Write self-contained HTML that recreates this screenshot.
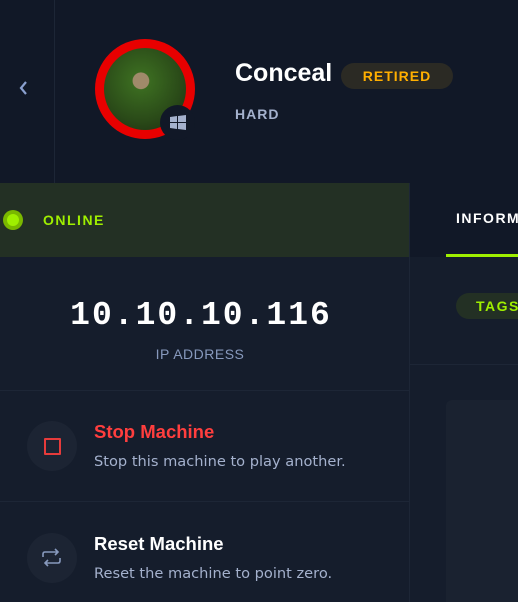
<!DOCTYPE html>
<html><head><style>
*{margin:0;padding:0;box-sizing:border-box}
html,body{width:518px;height:602px;overflow:hidden}
body{background:#151d2c;font-family:"Liberation Sans",sans-serif;position:relative}
.a{position:absolute}
</style></head><body>
<div class="a" style="left:0;top:0;width:518px;height:183px;background:#111827"></div>
<div class="a" style="left:54px;top:0;width:1px;height:183px;background:#1d2636"></div>
<svg class="a" style="left:16px;top:80px" width="14" height="16"><path d="M10 2 L5 8 L10 14" fill="none" stroke="#8aa0cf" stroke-width="2.2"/></svg>
<div class="a" style="left:95px;top:39px;width:100px;height:100px;border-radius:50%;background:#e80000"></div>
<div class="a" style="left:104px;top:48px;width:82px;height:82px;border-radius:50%;background:radial-gradient(circle at 45% 40%,#a08a6a 0 12%,#3a6a20 13%,#2a4a18 60%,#1a2a10)"></div>
<div class="a" style="left:160px;top:105px;width:35px;height:35px;border-radius:50%;background:#111827"></div>
<svg class="a" style="left:168px;top:113px" width="20" height="20"><path d="M2 4 L9 3 L9 9 L2 9Z M10 3 L18 2 L18 9 L10 9Z M2 10 L9 10 L9 16 L2 15Z M10 10 L18 10 L18 17 L10 16Z" fill="#a4b1cd"/></svg>
<div class="a" style="left:235px;top:59px;font-size:25px;font-weight:bold;color:#fff">Conceal</div>
<div class="a" style="left:341px;top:63px;width:112px;height:26px;border-radius:13px;background:#2b2a24;color:#ffaf00;font-size:14px;font-weight:bold;letter-spacing:1px;line-height:26px;text-align:center">RETIRED</div>
<div class="a" style="left:235px;top:106px;font-size:14px;font-weight:bold;color:#a4b1cd;letter-spacing:1px">HARD</div>
<div class="a" style="left:0;top:183px;width:409px;height:74px;background:#233024"></div>
<div class="a" style="left:3px;top:210px;width:20px;height:20px;border-radius:50%;background:#7ab800"></div>
<div class="a" style="left:7px;top:214px;width:12px;height:12px;border-radius:50%;background:#9fef00"></div>
<div class="a" style="left:43px;top:212px;font-size:14px;font-weight:bold;color:#9fef00;letter-spacing:1.5px">ONLINE</div>
<div class="a" style="left:409px;top:183px;width:1px;height:419px;background:#1d2636"></div>
<div class="a" style="left:410px;top:183px;width:108px;height:74px;background:#111827;overflow:hidden">
<div class="a" style="left:46px;top:27px;font-size:14px;font-weight:bold;color:#fff;letter-spacing:1.5px;white-space:nowrap">INFORMATION</div>
<div class="a" style="left:36px;top:71px;width:72px;height:3px;background:#9fef00"></div>
</div>
<div class="a" style="left:410px;top:364px;width:108px;height:1px;background:#1d2636"></div>
<div class="a" style="left:456px;top:293px;width:62px;height:26px;border-radius:13px 0 0 13px;background:#233024;color:#9fef00;font-size:14px;font-weight:bold;letter-spacing:1.5px;line-height:26px;padding-left:20px;overflow:hidden">TAGS</div>
<div class="a" style="left:446px;top:400px;width:72px;height:202px;border-radius:6px 0 0 0;background:#1a2230"></div>
<div class="a" style="left:0;top:297px;width:402px;text-align:center;font-family:'Liberation Mono',monospace;font-weight:bold;font-size:33px;letter-spacing:2px;color:#fff">10.10.10.116</div>
<div class="a" style="left:0;top:346px;width:400px;text-align:center;font-size:14px;color:#8799bd;letter-spacing:.5px">IP ADDRESS</div>
<div class="a" style="left:0;top:390px;width:409px;height:1px;background:#1d2636"></div>
<div class="a" style="left:0;top:501px;width:409px;height:1px;background:#1d2636"></div>
<div class="a" style="left:27px;top:421px;width:50px;height:50px;border-radius:50%;background:#1c2433"></div>
<div class="a" style="left:44px;top:438px;width:17px;height:17px;border:2px solid #e63b3b;border-radius:1px"></div>
<div class="a" style="left:94px;top:421px;font-size:18.5px;font-weight:bold;color:#ff3e3e">Stop Machine</div>
<div class="a" style="left:94px;top:453px;color:#a4b1cd;font-family:'DejaVu Sans',sans-serif;font-size:14.6px">Stop this machine to play another.</div>
<div class="a" style="left:27px;top:533px;width:50px;height:50px;border-radius:50%;background:#1c2433"></div>
<svg class="a" style="left:39px;top:545px" width="26" height="26"><path d="M4 12 V9 Q4 7 6 7 H19 M16 4 L19 7 L16 10 M21 13 V16 Q21 18 19 18 H6 M9 15 L6 18 L9 21" fill="none" stroke="#8799bd" stroke-width="1.6"/></svg>
<div class="a" style="left:94px;top:533px;font-size:18.5px;font-weight:bold;color:#fff">Reset Machine</div>
<div class="a" style="left:94px;top:565px;color:#a4b1cd;font-family:'DejaVu Sans',sans-serif;font-size:14.6px">Reset the machine to point zero.</div>
</body></html>
